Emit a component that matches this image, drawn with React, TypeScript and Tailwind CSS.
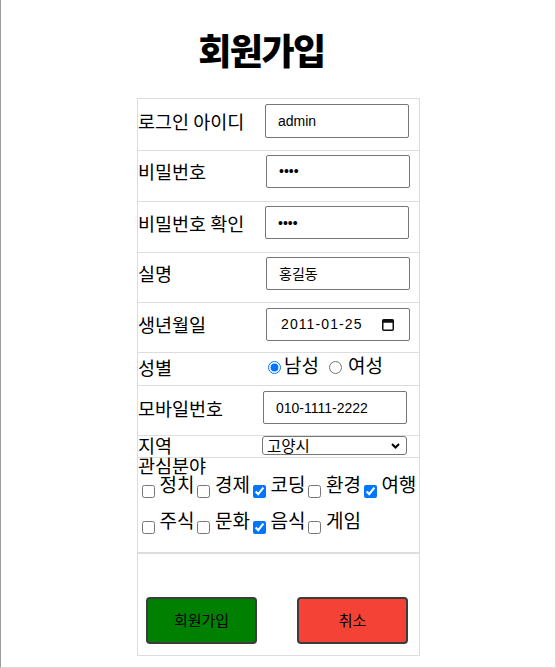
import { useState } from "react";

// one labelled line of the sign-up table
function Row({
  label,
  className,
  labelClass,
  children,
}: {
  label: string;
  className: string;
  labelClass: string;
  children: React.ReactNode;
}) {
  return (
    <div className={`flex border-b border-[#dddddd] ${className}`}>
      <span className={`shrink-0 text-[18.5px] whitespace-nowrap ${labelClass}`}>{label}</span>
      {children}
    </div>
  );
}

const inputCls =
  "h-[33px] w-[144px] rounded-[2px] border border-[#767676] bg-white pl-3 text-[14px] font-['Liberation_Sans','Noto_Sans_CJK_KR',sans-serif] outline-none";

export default function App() {
  const [gender, setGender] = useState("m");
  const [interests, setInterests] = useState<string[]>(["코딩", "여행", "음식"]);

  const toggle = (name: string) => {
    if (interests.includes(name)) {
      setInterests(interests.filter((i) => i !== name));
    } else {
      setInterests([...interests, name]);
    }
  };

  const rows = [
    ["정치", "경제", "코딩", "환경", "여행"],
    ["주식", "문화", "음식", "게임"],
  ];

  return (
    <div className="h-[668px] border-r border-b border-l border-r-[#dcdcdc] border-b-[#dcdcdc] border-l-[#a09a9a] bg-white font-['Noto_Sans_CJK_KR',sans-serif] text-black">
      <h1 className="pt-[29px] pr-[33px] text-center text-[36px] leading-[40px] font-black tracking-[-1.5px]">
        회원가입
      </h1>

      <div className="mt-[29px] ml-[136px] w-[283px] border border-[#dddddd]">
        <Row label="로그인 아이디" className="h-[52px] items-center pb-[7px]" labelClass="w-[127px] leading-[20px]">
          <input className={`${inputCls} h-[34px]`} defaultValue="admin" />
        </Row>
        <Row label="비밀번호" className="h-[51px] items-center pb-[10px]" labelClass="w-[128px] leading-[20px]">
          <input type="password" className={inputCls} defaultValue="1234" />
        </Row>
        <Row label="비밀번호 확인" className="h-[51px] items-center pb-[9px]" labelClass="w-[127px] leading-[20px]">
          <input type="password" className={inputCls} defaultValue="1234" />
        </Row>
        <Row label="실명" className="h-[50px] items-center pb-[9px]" labelClass="w-[128px] leading-[20px]">
          <input className={inputCls} defaultValue="홍길동" />
        </Row>
        <Row label="생년월일" className="h-[50px] items-center pb-[7px]" labelClass="w-[128px] leading-[20px]">
          {/* date field, shown in the yyyy-mm-dd form */}
          <div className="flex h-[33px] w-[144px] items-center justify-between rounded-[2px] border border-[#767676] bg-white pr-[15px] pl-[14px]">
            <span className="text-[14px] tracking-[1.1px] font-['Liberation_Sans',sans-serif]">2011-01-25</span>
            <svg width="12" height="13" viewBox="0 0 12 13">
              <rect x="0.75" y="1.75" width="10.5" height="10.5" rx="1" fill="none" stroke="#111" strokeWidth="1.5" />
              <rect x="0.75" y="1.75" width="10.5" height="3" fill="#111" />
            </svg>
          </div>
        </Row>
        <Row label="성별" className="h-[33px] items-center pb-[4px]" labelClass="w-[130px] leading-[20px]">
          <input
            type="radio"
            name="gender"
            className="h-[13px] w-[13px] shrink-0"
            checked={gender === "m"}
            onChange={() => setGender("m")}
          />
          <span className="mb-[5px] ml-[3px] text-[19px] leading-[22px]">남성</span>
          <input
            type="radio"
            name="gender"
            className="ml-[10px] h-[13px] w-[13px] shrink-0"
            checked={gender === "f"}
            onChange={() => setGender("f")}
          />
          <span className="mb-[5px] ml-[6px] text-[19px] leading-[22px]">여성</span>
        </Row>
        <Row label="모바일번호" className="h-[50px] items-center pb-[6px]" labelClass="w-[125px] leading-[20px]">
          <input className={inputCls} defaultValue="010-1111-2222" />
        </Row>
        <Row label="지역" className="h-[22px] items-start" labelClass="mt-[1px] w-[124px] leading-[16px]">
          {/* region picker */}
          <div className="flex h-[19px] w-[145px] items-center justify-between rounded-[3px] border border-[#767676] bg-white pr-[6px] pl-[4px]">
            <span className="text-[15.5px] leading-[17px]">고양시</span>
            <svg width="9" height="6" viewBox="0 0 9 6">
              <path d="M1 1 L4.5 4.5 L8 1" fill="none" stroke="#000" strokeWidth="2" />
            </svg>
          </div>
        </Row>

        {/* interests */}
        <div className="h-[96px] border-b-2 border-[#dddddd]">
          <div className="text-[18.5px] leading-[15px]">관심분야</div>
          <div className="mt-[1px]">
            {rows.map((row, idx) => (
              <div key={idx} className="flex h-[36px] items-start gap-x-[3px] pl-[4px] whitespace-nowrap">
                {row.map((name) => (
                  <label key={name} className="flex shrink-0 items-start gap-x-[4.5px]">
                    <input
                      type="checkbox"
                      className="mt-[11px] h-[13px] w-[13px] shrink-0"
                      checked={interests.includes(name)}
                      onChange={() => toggle(name)}
                    />
                    <span className="text-[19px] leading-[20px]">{name}</span>
                  </label>
                ))}
              </div>
            ))}
          </div>
        </div>

        {/* buttons */}
        <div className="flex h-[101px] items-start pt-[43px] pl-[8px]">
          <button className="h-[47px] w-[111px] rounded-[4px] border-2 border-[#3c3c3c] bg-[#008000] text-[15px] text-black">
            회원가입
          </button>
          <button className="ml-[40px] h-[47px] w-[111px] rounded-[4px] border-2 border-[#3c3c3c] bg-[#f44336] text-[15px] text-black">
            취소
          </button>
        </div>
      </div>
    </div>
  );
}
